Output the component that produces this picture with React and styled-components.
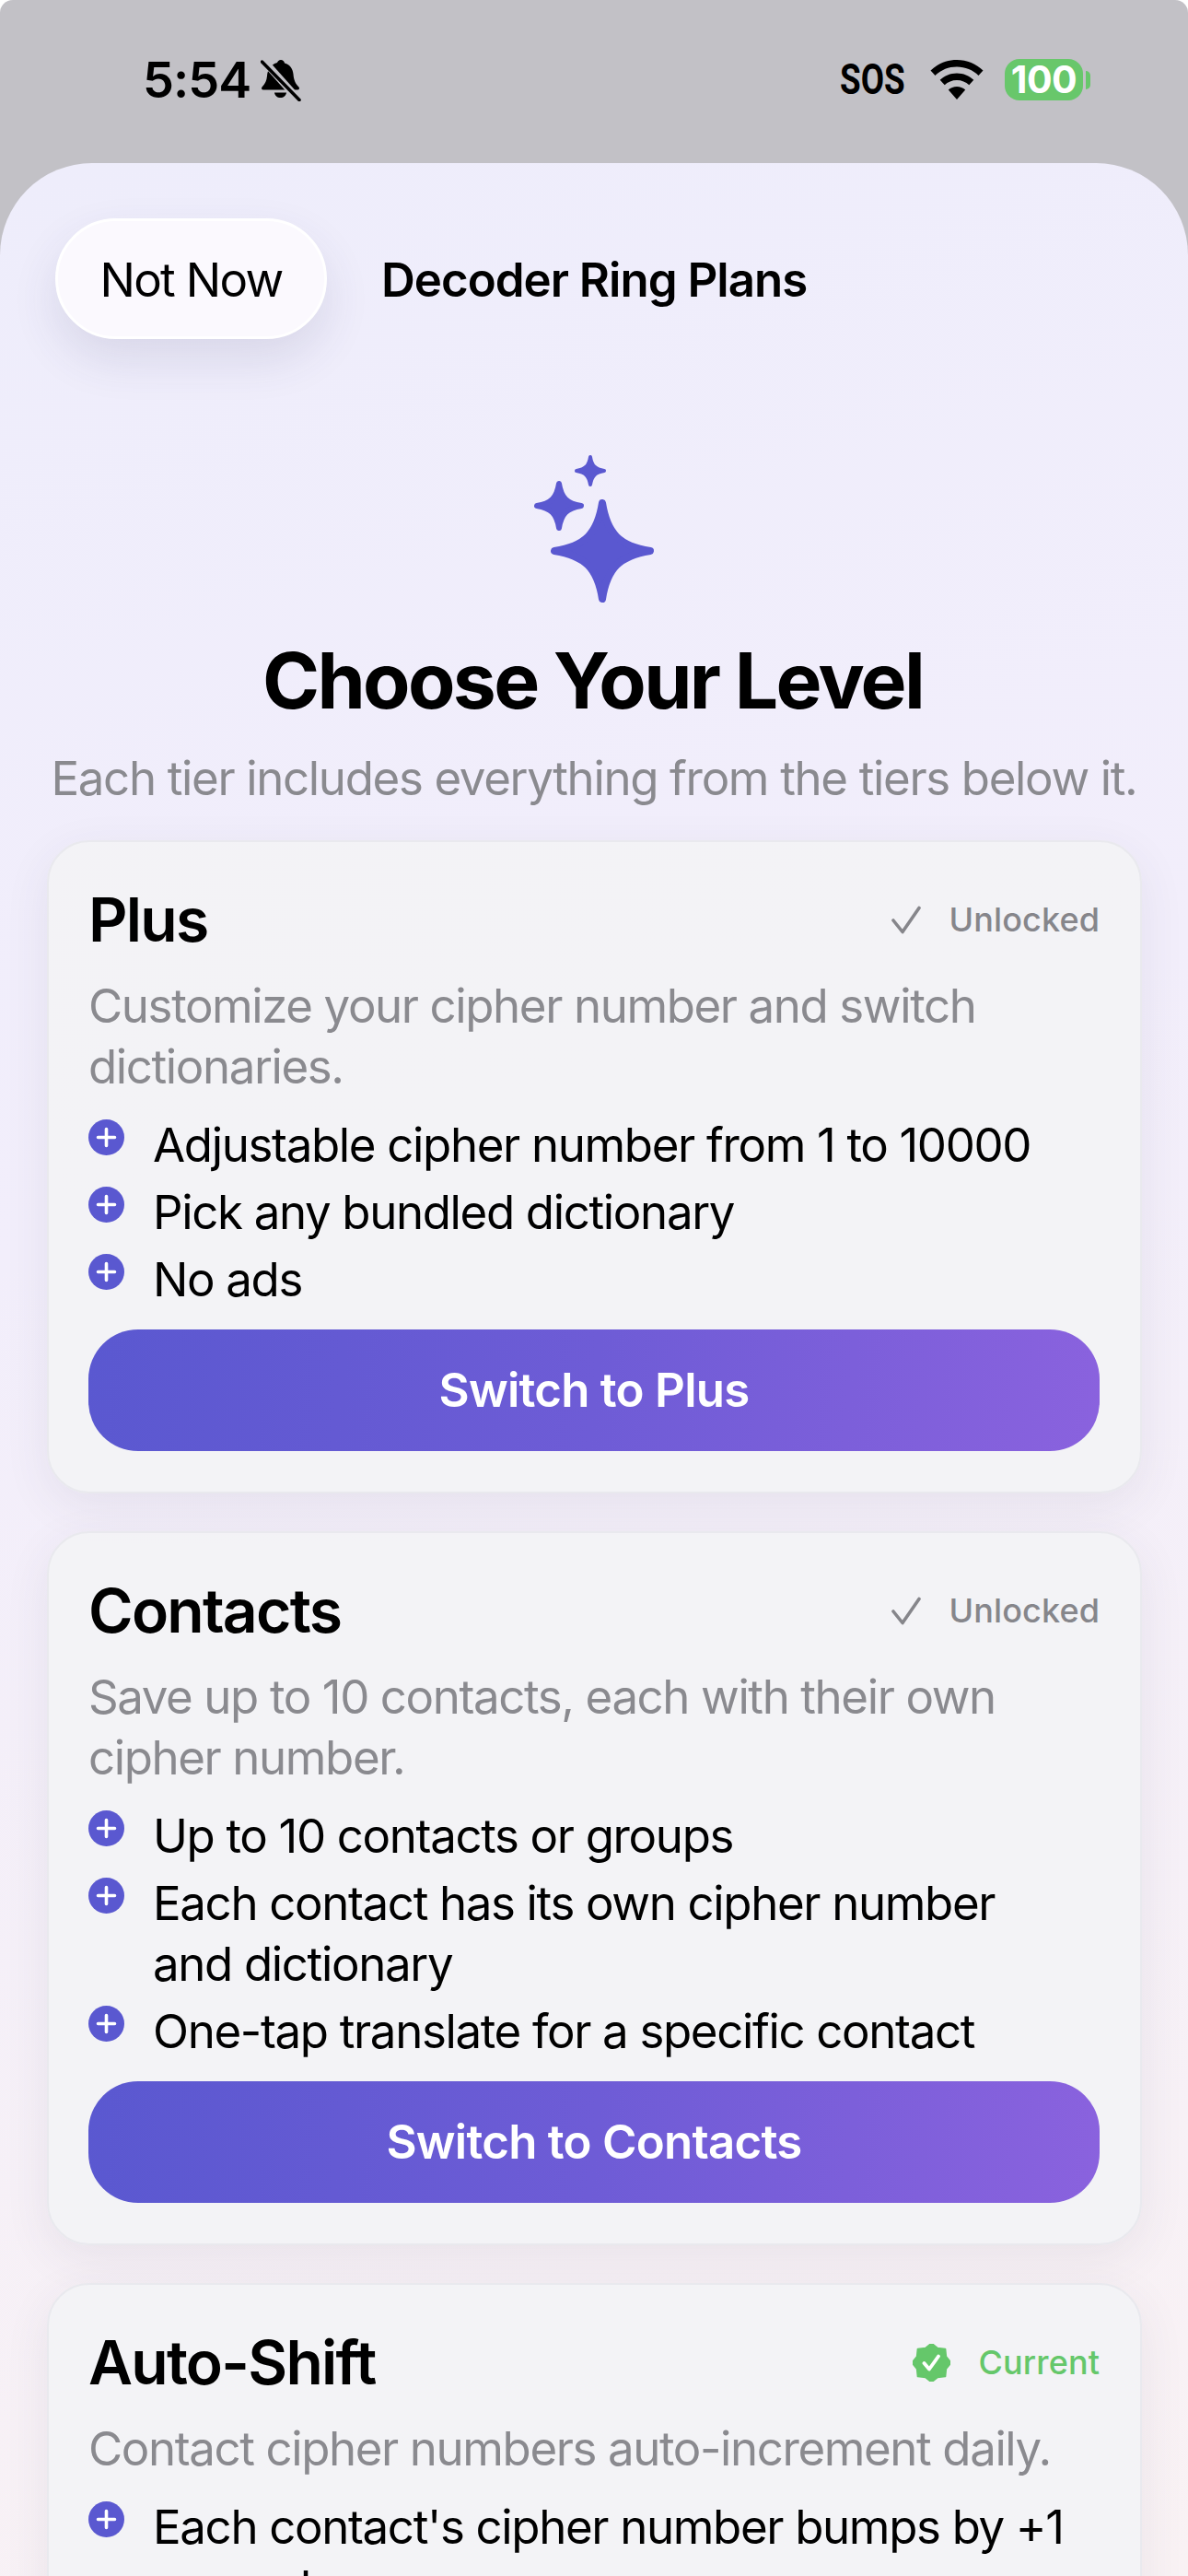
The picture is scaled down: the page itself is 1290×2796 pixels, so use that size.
import React from 'react';
import styled, { createGlobalStyle } from 'styled-components';

const GlobalStyle = createGlobalStyle`
  html, body {
    margin: 0;
    padding: 0;
    background: #ffffff;
  }
  * {
    box-sizing: border-box;
  }
`;

const Screen = styled.div`
  width: 1290px;
  height: 2796px;
  overflow: hidden;
  display: flex;
  flex-direction: column;
  background: #c2c1c6;
  border-radius: 14px 14px 0 0;
  font-family: Inter, "Noto Sans", sans-serif;
  color: #000;
`;

const StatusBar = styled.div`
  flex: none;
  height: 177px;
  padding: 64px 106px 0 155px;
  display: flex;
  justify-content: space-between;
  align-items: flex-start;
`;

const StatusLeft = styled.div`
  display: flex;
  align-items: center;
  gap: 11px;
  height: 45px;
`;

const StatusRight = styled.div`
  display: flex;
  align-items: center;
  height: 45px;
`;

const Time = styled.span`
  font-size: 54px;
  font-weight: 600;
  letter-spacing: -1px;
  line-height: 45px;
`;

const Sos = styled.span`
  font-family: "Roboto", sans-serif;
  font-size: 46px;
  font-weight: 700;
  line-height: 45px;
  margin-right: 28px;
  transform: scaleX(0.8);
  transform-origin: left center;
  width: 70px;
`;

const Battery = styled.div`
  display: flex;
  align-items: center;
  gap: 3px;
  margin-left: 23px;
`;

const BatteryBody = styled.div`
  width: 85px;
  height: 45px;
  border-radius: 16px;
  background: #68c76b;
  color: #fff;
  font-size: 41px;
  font-weight: 700;
  line-height: 45px;
  text-align: center;
  letter-spacing: -0.5px;
`;

const BatteryNub = styled.div`
  width: 5px;
  height: 20px;
  border-radius: 0 5px 5px 0;
  background: #68c76b;
`;

const Sheet = styled.div`
  flex: 1;
  min-height: 0;
  overflow: hidden;
  border-radius: 100px 100px 0 0;
  background: linear-gradient(165deg, #eeedfb 0%, #f2eefb 40%, #f9f2f4 100%);
`;

const NavBar = styled.div`
  display: flex;
  align-items: center;
  gap: 59px;
  padding: 60px 60px 0;
`;

const NotNowButton = styled.div`
  width: 295px;
  height: 131px;
  border-radius: 66px;
  background: #fbf9fe;
  border: 3px solid #ffffff;
  box-shadow: 0 22px 50px rgba(60, 60, 110, 0.12);
  font-size: 51px;
  line-height: 127px;
  text-align: center;
  letter-spacing: -1.7px;
`;

const NavTitle = styled.div`
  font-size: 51px;
  font-weight: 600;
  letter-spacing: -1px;
  padding-top: 2px;
`;

const Hero = styled.div`
  display: flex;
  flex-direction: column;
  align-items: center;
  padding-top: 125px;
`;

const HeroIcon = styled.svg`
  width: 132px;
  height: 164px;
  fill: #5a58d0;
  stroke: #5a58d0;
  stroke-linejoin: round;
`;

const Headline = styled.h1`
  margin: 31px 0 0;
  padding-right: 3px;
  font-size: 84px;
  font-weight: 700;
  line-height: 102px;
  letter-spacing: -2.65px;
`;

const Subhead = styled.p`
  margin: 22px 0 0;
  font-size: 51px;
  line-height: 66px;
  letter-spacing: -1.35px;
  color: #8a8a8f;
`;

const CardList = styled.div`
  display: flex;
  flex-direction: column;
  gap: 41px;
  padding: 34px 50px 0 51px;
`;

const Card = styled.div`
  padding: 45px 44px 44px 43px;
  border-radius: 46px;
  background: rgba(242, 242, 245, 0.95);
  border: 2px solid #e9e9ee;
  box-shadow: 0 14px 50px rgba(70, 60, 90, 0.08);
`;

const CardHeader = styled.div`
  display: flex;
  justify-content: space-between;
  align-items: center;
  height: 78px;
`;

const CardTitle = styled.h2`
  margin: 0;
  font-size: 66px;
  font-weight: 600;
  letter-spacing: -1.75px;
`;

const Status = styled.div`
  display: flex;
  align-items: center;
  gap: 31px;
  font-size: 36px;
  font-weight: 500;
  letter-spacing: 0.1px;
  color: ${(p) => (p.$current ? '#65c76a' : '#86868b')};
`;

const CardDesc = styled.p`
  margin: 22px 0 0;
  font-size: 51px;
  line-height: 66px;
  letter-spacing: -1.4px;
  color: #8a8a8f;
`;

const FeatureList = styled.ul`
  list-style: none;
  margin: 19px 0 0;
  padding: 0 35px 0 0;
  display: flex;
  flex-direction: column;
  gap: 7px;
`;

const Feature = styled.li`
  display: flex;
  gap: 31px;
  font-size: 51px;
  line-height: 66px;
  letter-spacing: -1.35px;
`;

const PlusIcon = styled.svg`
  flex: none;
  width: 39px;
  height: 39px;
  margin-top: 5px;
`;

const SwitchButton = styled.div`
  margin-top: 21px;
  height: 132px;
  border-radius: 54px;
  background: linear-gradient(95deg, #5a58d0 0%, #6e5cd6 50%, #8a62de 100%);
  color: #fff;
  font-size: 51px;
  font-weight: 600;
  line-height: 132px;
  text-align: center;
  letter-spacing: -0.75px;
`;

// four pointed star with thin arms, the round stroke softens the tips
const starPath = (cx, cy, r) => {
  const a = r * 0.17;
  const b = r * 0.3;
  return [
    `M${cx} ${cy - r}`,
    `C${cx + a * 0.6} ${cy - b * 1.2} ${cx + b * 1.2} ${cy - a * 0.6} ${cx + r} ${cy}`,
    `C${cx + b * 1.2} ${cy + a * 0.6} ${cx + a * 0.6} ${cy + b * 1.2} ${cx} ${cy + r}`,
    `C${cx - a * 0.6} ${cy + b * 1.2} ${cx - b * 1.2} ${cy + a * 0.6} ${cx - r} ${cy}`,
    `C${cx - b * 1.2} ${cy - a * 0.6} ${cx - a * 0.6} ${cy - b * 1.2} ${cx} ${cy - r}`,
    'Z',
  ].join(' ');
};

const Sparkles = () => (
  <HeroIcon viewBox="0 0 132 164">
    <path d={starPath(75, 105, 52)} strokeWidth="8" />
    <path d={starPath(28, 56, 24)} strokeWidth="6" />
    <path d={starPath(62, 18, 15)} strokeWidth="4" />
  </HeroIcon>
);

const BellSlash = () => (
  <svg width="44" height="46" viewBox="0 0 44 46">
    <path d="M22 1c2 0 3.600 1.500 4 3.500 6 1.500 9 6.500 9.500 12 .5 6 2 10 6 14 1 1 .5 3-1.500 3H3c-2 0-2.500-2-1.500-3 3.500-3.500 5-7 5.500-12 .5-6 3-12 11-14.500C18.400 2.500 20 1 22 1zM15 36.500h13c-.5 3.500-3 5.500-6.500 5.500S15.500 40 15 36.500z" fill="#000" />
    <path d="M3 1.500 L41 44" stroke="#c2c1c6" strokeWidth="8" />
    <path d="M1.500 3 L42 44.500" stroke="#000" strokeWidth="3.500" strokeLinecap="round" />
  </svg>
);

const Wifi = () => (
  <svg width="58" height="43" viewBox="0 0 58 43">
    <path d="M29 0c11 0 21 4.300 28.500 11.500l-5 5.500C46.500 11 38 7.500 29 7.500S11.500 11 5.500 17l-5-5.500C8 4.300 18 0 29 0z" fill="#000" />
    <path d="M29 14.500c7 0 13.500 2.800 18.300 7.300l-5 5.500c-3.500-3.300-8.200-5.300-13.300-5.300s-9.800 2-13.300 5.300l-5-5.500c4.800-4.500 11.300-7.300 18.300-7.300z" fill="#000" />
    <path d="M29 29c3.500 0 6.800 1.300 9.200 3.500L29 43l-9.200-10.500C22.200 30.300 25.500 29 29 29z" fill="#000" />
  </svg>
);

const PlusCircle = () => (
  <PlusIcon viewBox="0 0 39 39">
    <circle cx="19.500" cy="19.500" r="19.500" fill="#5a58d0" />
    <path d="M19.500 10.500v18M10.500 19.500h18" stroke="#fff" strokeWidth="3.600" strokeLinecap="round" />
  </PlusIcon>
);

const CheckMark = () => (
  <svg width="32" height="31" viewBox="0 0 32 31">
    <path d="M2 16 L12 28.500 L30 2.500" fill="none" stroke="#86868b" strokeWidth="3.600" strokeLinecap="round" strokeLinejoin="round" />
  </svg>
);

const badgePath = () => {
  const pts = [];
  const n = 8;
  for (let i = 0; i < n * 2; i++) {
    const ang = (Math.PI * i) / n - Math.PI / 2;
    const r = i % 2 === 0 ? 21 : 17;
    pts.push(`${(20.5 + r * Math.cos(ang)).toFixed(2)} ${(20.5 + r * Math.sin(ang)).toFixed(2)}`);
  }
  return `M${pts.join(' L')} Z`;
};

const VerifiedBadge = () => (
  <svg width="41" height="41" viewBox="0 0 41 41">
    <path d={badgePath()} fill="#65c76a" stroke="#65c76a" strokeWidth="2" strokeLinejoin="round" />
    <path d="M12.500 21 L18 27.500 L28 13.500" fill="none" stroke="#fff" strokeWidth="3.800" strokeLinecap="round" strokeLinejoin="round" />
  </svg>
);

const plans = [
  {
    name: 'Plus',
    status: 'Unlocked',
    desc: 'Customize your cipher number and switch dictionaries.',
    features: ['Adjustable cipher number from 1 to 10000', 'Pick any bundled dictionary', 'No ads'],
    action: 'Switch to Plus',
  },
  {
    name: 'Contacts',
    status: 'Unlocked',
    desc: 'Save up to 10 contacts, each with their own cipher number.',
    features: [
      'Up to 10 contacts or groups',
      'Each contact has its own cipher number and dictionary',
      'One-tap translate for a specific contact',
    ],
    action: 'Switch to Contacts',
  },
  {
    name: 'Auto-Shift',
    status: 'Current',
    desc: 'Contact cipher numbers auto-increment daily.',
    features: ["Each contact's cipher number bumps by +1 every day"],
  },
];

const App = () => (
  <Screen>
    <GlobalStyle />
    <StatusBar>
      <StatusLeft>
        <Time>5:54</Time>
        <BellSlash />
      </StatusLeft>
      <StatusRight>
        <Sos>SOS</Sos>
        <Wifi />
        <Battery>
          <BatteryBody>100</BatteryBody>
          <BatteryNub />
        </Battery>
      </StatusRight>
    </StatusBar>
    <Sheet>
      <NavBar>
        <NotNowButton>Not Now</NotNowButton>
        <NavTitle>Decoder Ring Plans</NavTitle>
      </NavBar>
      <Hero>
        <Sparkles />
        <Headline>Choose Your Level</Headline>
        <Subhead>Each tier includes everything from the tiers below it.</Subhead>
      </Hero>
      <CardList>
        {plans.map((plan) => (
          <Card key={plan.name}>
            <CardHeader>
              <CardTitle>{plan.name}</CardTitle>
              <Status $current={plan.status === 'Current'}>
                {plan.status === 'Current' ? <VerifiedBadge /> : <CheckMark />}
                {plan.status}
              </Status>
            </CardHeader>
            <CardDesc>{plan.desc}</CardDesc>
            <FeatureList>
              {plan.features.map((f) => (
                <Feature key={f}>
                  <PlusCircle />
                  <span>{f}</span>
                </Feature>
              ))}
            </FeatureList>
            {plan.action && <SwitchButton>{plan.action}</SwitchButton>}
          </Card>
        ))}
      </CardList>
    </Sheet>
  </Screen>
);

export default App;
